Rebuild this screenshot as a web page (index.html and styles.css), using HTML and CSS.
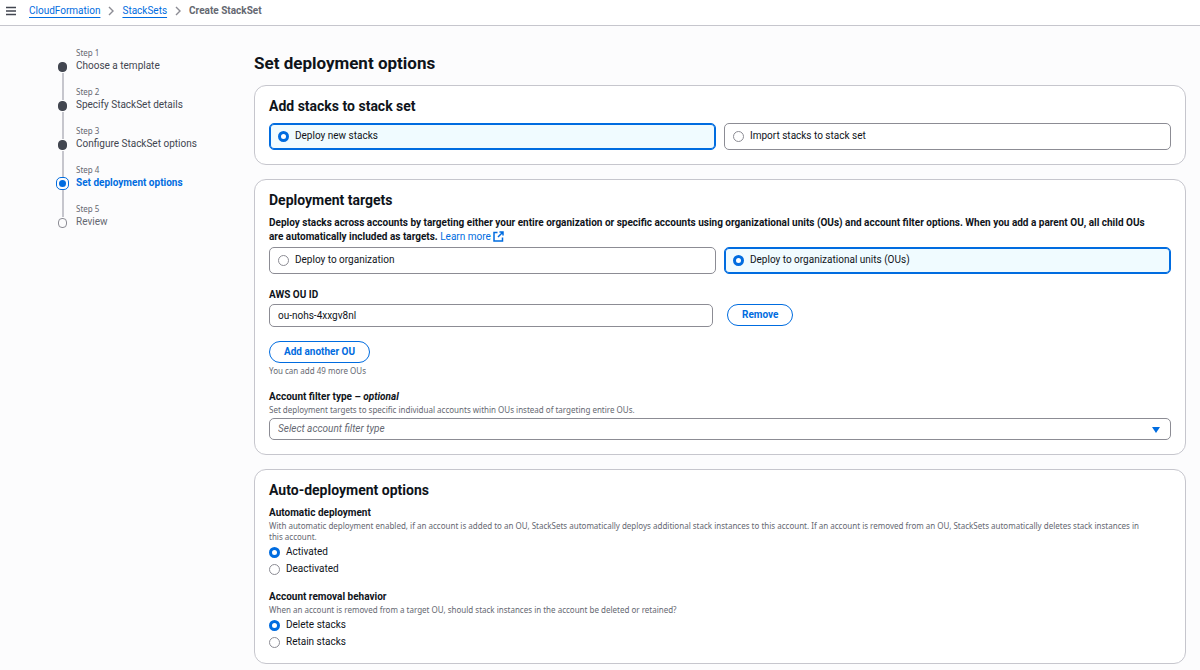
FILE: index.html
```html
<!DOCTYPE html>
<html lang="en">
<head>
  <meta charset="UTF-8">
  <meta name="viewport" content="width=device-width, initial-scale=1.0">
  <title>Create StackSet - CloudFormation</title>
  <link rel="stylesheet" href="styles.css">
</head>
<body>
<!-- Top bar -->
<header class="topbar">
  <button type="button" class="menu-btn" aria-label="Open navigation">
    <svg width="12" height="10" viewBox="0 0 12 10"><path d="M1 1.5h10M1 5h10M1 8.5h10" fill="none" stroke="#424650" stroke-width="1.4"/></svg>
  </button>
  <nav class="breadcrumbs" aria-label="Breadcrumbs">
    <a href="#">CloudFormation</a>
    <svg width="6" height="10" viewBox="0 0 6 10"><path d="M1 1l4 4-4 4" fill="none" stroke="#8c8c94" stroke-width="1.4"/></svg>
    <a href="#">StackSets</a>
    <svg width="6" height="10" viewBox="0 0 6 10"><path d="M1 1l4 4-4 4" fill="none" stroke="#8c8c94" stroke-width="1.4"/></svg>
    <span class="current">Create StackSet</span>
  </nav>
</header>

<div class="layout">
  <!-- Wizard steps -->
  <ol class="steps">
    <li class="step done">
      <span class="marker"><span class="dot"></span></span>
      <div><p class="step-label">Step 1</p><p class="step-title">Choose a template</p></div>
    </li>
    <li class="step done">
      <span class="marker"><span class="dot"></span></span>
      <div><p class="step-label">Step 2</p><p class="step-title">Specify StackSet details</p></div>
    </li>
    <li class="step done">
      <span class="marker"><span class="dot"></span></span>
      <div><p class="step-label">Step 3</p><p class="step-title">Configure StackSet options</p></div>
    </li>
    <li class="step active">
      <span class="marker"><span class="dot"></span></span>
      <div><p class="step-label">Step 4</p><p class="step-title">Set deployment options</p></div>
    </li>
    <li class="step">
      <span class="marker"><span class="dot"></span></span>
      <div><p class="step-label">Step 5</p><p class="step-title">Review</p></div>
    </li>
  </ol>

  <main>
    <h1>Set deployment options</h1>

    <form>
      <section class="card">
        <h2>Add stacks to stack set</h2>
        <div class="tiles">
          <label class="tile"><input type="radio" name="stacks" checked><span>Deploy new stacks</span></label>
          <label class="tile"><input type="radio" name="stacks"><span>Import stacks to stack set</span></label>
        </div>
      </section>

      <section class="card">
        <h2>Deployment targets</h2>
        <p class="description">Deploy stacks across accounts by targeting either your entire organization or specific accounts using organizational units (OUs) and account filter options. When you add a parent OU, all child OUs are automatically included as targets.
          <a href="#">Learn more <svg width="11" height="11" viewBox="0 0 11 11"><path d="M4.500 1.500H1v8.500h8.500V6.500M6.500 1H10v3.500M10 1L5 6" fill="none" stroke="#006ce0" stroke-width="1.500"/></svg></a></p>
        <div class="tiles">
          <label class="tile"><input type="radio" name="target"><span>Deploy to organization</span></label>
          <label class="tile"><input type="radio" name="target" checked><span>Deploy to organizational units (OUs)</span></label>
        </div>

        <div class="field">
          <label class="field-label" for="ou-id">AWS OU ID</label>
          <div class="ou-row">
            <input type="text" class="control" id="ou-id" value="ou-nohs-4xxgv8nl">
            <button type="button" class="btn">Remove</button>
          </div>
          <button type="button" class="btn">Add another OU</button>
          <p class="hint">You can add 49 more OUs</p>
        </div>

        <div class="field">
          <label class="field-label" for="filter-type">Account filter type – <em>optional</em></label>
          <p class="hint">Set deployment targets to specific individual accounts within OUs instead of targeting entire OUs.</p>
          <div class="select-wrap">
            <select class="control" id="filter-type">
              <option>Select account filter type</option>
            </select>
            <svg class="caret" width="8" height="6" viewBox="0 0 8 6"><path d="M0 0h8L4 6z" fill="#006ce0"/></svg>
          </div>
        </div>
      </section>

      <section class="card">
        <h2>Auto-deployment options</h2>
        <fieldset>
          <legend class="field-label">Automatic deployment</legend>
          <p class="hint">With automatic deployment enabled, if an account is added to an OU, StackSets automatically deploys additional stack instances to this account. If an account is removed from an OU, StackSets automatically deletes stack instances in this account.</p>
          <label class="radio"><input type="radio" name="auto" checked><span>Activated</span></label>
          <label class="radio"><input type="radio" name="auto"><span>Deactivated</span></label>
        </fieldset>
        <fieldset>
          <legend class="field-label">Account removal behavior</legend>
          <p class="hint">When an account is removed from a target OU, should stack instances in the account be deleted or retained?</p>
          <label class="radio"><input type="radio" name="removal" checked><span>Delete stacks</span></label>
          <label class="radio"><input type="radio" name="removal"><span>Retain stacks</span></label>
        </fieldset>
      </section>
    </form>
  </main>
</div>
</body>
</html>
```
FILE: styles.css
```css
:root {
  --blue: #006ce0;
  --text: #0f141a;
  --gray: #656871;
  --dark: #424650;
  --line: #c6c6cd;
  --border: #8c8c94;
}

* {
  margin: 0;
  padding: 0;
  box-sizing: border-box;
}

body {
  background-color: #fcfcfd;
  color: var(--text);
  font-family: Roboto, 'Open Sans', sans-serif;
  font-size: 10px;
  line-height: 14px;
}

button,
input,
select {
  font: inherit;
  color: inherit;
}

a {
  color: var(--blue);
}

/* Top bar */
.topbar {
  display: flex;
  align-items: center;
  gap: 12px;
  height: 26px;
  padding: 0 5px 4px;
  background-color: white;
  border-bottom: 1px solid var(--line);
}

.menu-btn {
  display: flex;
  border: none;
  background: none;
  cursor: pointer;
}

.breadcrumbs {
  display: flex;
  align-items: center;
  gap: 8px;
}

.breadcrumbs a {
  text-underline-offset: 3px;
}

.current {
  color: var(--gray);
  font-weight: 700;
}

.layout {
  display: grid;
  grid-template-columns: 184px 1fr;
  gap: 14px;
  padding: 21px 14px 6px 56px;
}

/* Wizard steps */
.steps {
  list-style: none;
}

.step {
  display: flex;
  gap: 7px;
  height: 39px;
  line-height: 13px;
}

.marker {
  display: flex;
  flex-direction: column;
  align-items: center;
  gap: 1px;
  width: 13px;
}

.marker::before,
.marker::after {
  content: "";
  width: 2px;
  height: 14px;
  background-color: var(--line);
}

.marker::after {
  flex: 1;
}

.step:first-child .marker::before,
.step:last-child .marker::after {
  background: none;
}

.dot {
  width: 9px;
  height: 10px;
  border: 1px solid var(--border);
  border-radius: 4px;
}

.step-label {
  color: var(--gray);
  font-family: 'Noto Sans', sans-serif;
  font-size: 8px;
  line-height: 12px;
}

.step-title {
  color: var(--gray);
}

.done .dot {
  background-color: var(--dark);
  border-color: var(--dark);
}

.done .step-title {
  color: var(--dark);
}

.active .dot {
  display: grid;
  place-items: center;
  width: 13px;
  height: 13px;
  margin: -2px 0 -1px;
  border: 1px solid var(--blue);
  border-radius: 5px;
}

.active .dot::after {
  content: "";
  width: 7px;
  height: 7px;
  border-radius: 50%;
  background-color: var(--blue);
}

.active .step-title {
  color: var(--blue);
  font-weight: 700;
}

/* Content */
h1 {
  margin: 5px 0 11px;
  font-size: 17px;
  line-height: 22px;
  font-weight: 700;
}

h2 {
  font-size: 14px;
  line-height: 18px;
  font-weight: 700;
}

.card {
  margin-bottom: 14px;
  padding: 11px 14px 14px;
  background-color: white;
  border: 1px solid var(--line);
  border-radius: 12px;
}

.card:last-child {
  margin-bottom: 0;
}

.description {
  margin: 7px 0 3px;
  padding-right: 14px;
  font-weight: 700;
}

.description a {
  font-weight: 400;
  text-decoration: none;
}

.description svg {
  vertical-align: -2px;
}

/* Radio buttons */
input[type="radio"] {
  appearance: none;
  width: 11px;
  height: 11px;
  border: 1px solid var(--border);
  border-radius: 50%;
  background-color: white;
}

input[type="radio"]:checked {
  border: 3px solid var(--blue);
}

.tiles {
  display: grid;
  grid-template-columns: 1fr 1fr;
  gap: 8px;
}

h2 + .tiles {
  margin-top: 8px;
}

.tile {
  display: flex;
  align-items: center;
  gap: 6px;
  height: 27px;
  padding: 0 8px 1px;
  border: 1px solid var(--border);
  border-radius: 5px;
}

.tile:has(input:checked) {
  border-color: var(--blue);
  background-color: #f0fbff;
  box-shadow: inset 0 0 0 1px var(--blue);
}

.radio {
  display: flex;
  align-items: center;
  gap: 6px;
  height: 14px;
  margin-top: 3px;
}

/* Form fields */
.field {
  margin-top: 14px;
}

.field-label {
  display: block;
  font-weight: 700;
}

.hint {
  padding-right: 20px;
  color: var(--gray);
  font-family: 'Noto Sans', sans-serif;
  font-size: 8px;
  line-height: 11px;
}

.control {
  width: 100%;
  height: 23px;
  padding: 0 8px;
  background-color: white;
  border: 1px solid var(--border);
  border-radius: 5px;
}

.ou-row {
  display: grid;
  grid-template-columns: 1fr 1fr;
  justify-items: start;
  gap: 14px;
  margin: 2px 0 14px;
}

.btn {
  display: block;
  height: 22px;
  padding: 0 14px 1px;
  border: 1px solid var(--blue);
  border-radius: 11px;
  background-color: white;
  color: var(--blue);
  font-weight: 700;
  cursor: pointer;
}

.btn + .hint {
  margin-top: 2px;
}

.select-wrap {
  position: relative;
  margin-top: 3px;
}

select.control {
  display: block;
  height: 22px;
  appearance: none;
  color: var(--gray);
  font-style: italic;
}

.caret {
  position: absolute;
  top: 9px;
  right: 11px;
  pointer-events: none;
}

fieldset {
  border: none;
  margin-top: 7px;
}

fieldset + fieldset {
  margin-top: 14px;
}
```
